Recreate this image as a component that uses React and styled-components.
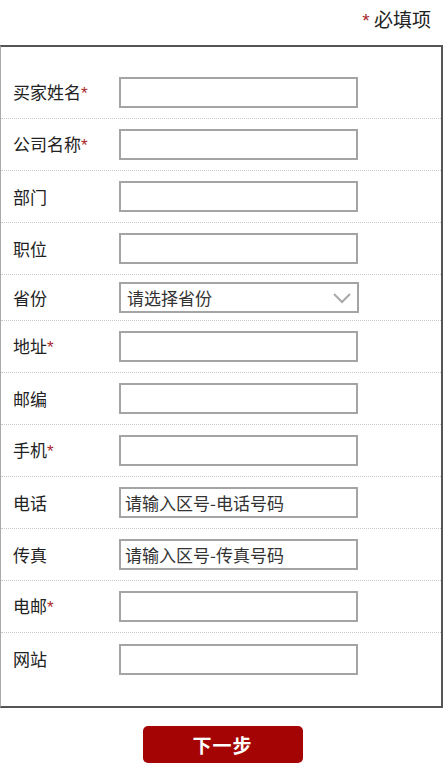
import React from 'react';
import styled, { createGlobalStyle } from 'styled-components';

const GlobalStyle = createGlobalStyle`
	html, body {
		margin: 0;
		padding: 0;
		background: #fff;
		font-family: "Noto Sans CJK SC", "Noto Sans", sans-serif;
		color: #222;
	}
`;

const fields = [
	{ label: '买家姓名', required: true },
	{ label: '公司名称', required: true },
	{ label: '部门' },
	{ label: '职位' },
	{ label: '省份', select: true },
	{ label: '地址', required: true },
	{ label: '邮编' },
	{ label: '手机', required: true },
	{ label: '电话', placeholder: '请输入区号-电话号码' },
	{ label: '传真', placeholder: '请输入区号-传真号码' },
	{ label: '电邮', required: true },
	{ label: '网站' },
];

function App() {
	return (
		<Page>
			<GlobalStyle />
			<Note><Star>*</Star> 必填项</Note>
			<FormBox>
				{fields.map((f, i) => (
					<Row key={f.label} $short={f.select} $last={i === fields.length - 1}>
						<Label>
							{f.label}
							{f.required && <Star $small>*</Star>}
						</Label>
						{f.select ? (
							<SelectBox>
								<span>请选择省份</span>
								<svg width="20" height="12" viewBox="0 0 20 12">
									<path d="M2 2 L10 10 L18 2" fill="none" stroke="#a8a8a8" strokeWidth="2" />
								</svg>
							</SelectBox>
						) : (
							<Input placeholder={f.placeholder || ''} />
						)}
					</Row>
				))}
			</FormBox>
			<Footer>
				<NextButton>下一步</NextButton>
			</Footer>
		</Page>
	);
}

const Page = styled.div`
	width: 445px;
	height: 769px;
	overflow: hidden;
`;
const Note = styled.div`
	height: 45px;
	box-sizing: border-box;
	padding: 5px 14px 0 0;
	text-align: right;
	font-size: 19px;
	line-height: 28px;
	color: #222;
`;
const Star = styled.span`
	color: #a8272b;
	font-size: ${p => (p.$small ? '17px' : '19px')};
	font-family: "Liberation Sans", sans-serif;
`;
const FormBox = styled.div`
	width: 443px;
	box-sizing: border-box;
	border-top: 2px solid #555;
	border-right: 2px solid #555;
	border-bottom: 2px solid #555;
	border-left: 1px solid #aaa;
	padding: 20px 0 21px;
`;
const Row = styled.div`
	display: flex;
	align-items: center;
	height: ${p => (p.$short ? '46px' : '52px')};
	box-sizing: border-box;
	border-bottom: ${p => (p.$last ? 'none' : '1px dotted #c8c8c8')};
`;
const Label = styled.div`
	width: 118px;
	box-sizing: border-box;
	padding-left: 12px;
	font-size: 17px;
	line-height: 24px;
	color: #222;
`;
const Input = styled.input`
	width: 239px;
	height: 31px;
	box-sizing: border-box;
	border: 2px solid #a4a4a4;
	border-radius: 0;
	padding: 0 4px;
	font-family: "Noto Sans CJK SC", sans-serif;
	font-size: 17px;
	outline: none;
	&::placeholder {
		color: #333;
	}
`;
const SelectBox = styled.div`
	width: 240px;
	height: 31px;
	box-sizing: border-box;
	border: 2px solid #a4a4a4;
	display: flex;
	align-items: center;
	justify-content: space-between;
	padding: 0 5px 0 6px;
	font-size: 17px;
	color: #333;
`;
const Footer = styled.div`
	display: flex;
	justify-content: center;
	padding-top: 18px;
`;
const NextButton = styled.button`
	width: 160px;
	height: 37px;
	border: none;
	border-radius: 5px;
	background: #a50404;
	color: #fff;
	font-family: "Noto Sans CJK SC", sans-serif;
	font-weight: 700;
	font-size: 19px;
	letter-spacing: 1px;
`;

export default App;
